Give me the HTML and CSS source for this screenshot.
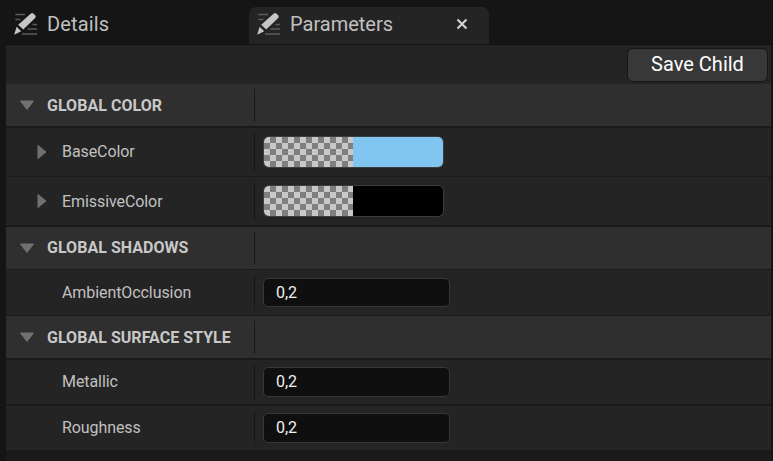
FILE: index.html
```
<!DOCTYPE html>
<html lang="en">
<head>
<meta charset="utf-8">
<title>Parameters</title>
<link rel="stylesheet" href="styles.css">
</head>
<body>
<svg class="defs" aria-hidden="true">
  <symbol id="pencil" viewBox="0 0 24 24">
    <path d="M1.300 2.500H11M1.300 7.500H6.500M18.500 12.500h4.500M13.500 17h9.500M8 22h15" stroke="#5c5c5c" stroke-width="1.300" fill="none"/>
    <path d="M16.600 1.700Q18 .5 19.300 1.500L21.300 3.500Q22.300 4.700 21.200 6L9.200 17.500 4.200 12.800Z" fill="#c6c6c6"/>
    <path d="M2.600 14.700L7.200 19.300 .2 22.700Z" fill="#c6c6c6"/>
  </symbol>
</svg>
<nav class="tabs">
  <div class="tab"><svg class="icon"><use href="#pencil"/></svg><span class="tab-name details">Details</span></div>
  <div class="tab active"><svg class="icon"><use href="#pencil"/></svg><span class="tab-name">Parameters</span>
    <svg class="close" viewBox="0 0 12 12"><path d="M1.500 1.500l9 9M10.500 1.500l-9 9" stroke="#d0d0d0" stroke-width="2.200"/></svg></div>
</nav>
<main class="panel">
  <div class="toolbar"><button class="save">Save Child</button></div>
  <section class="group">
    <h2 class="row head"><span class="name"><svg class="arrow down" viewBox="0 0 16 11"><path d="M1.500 1h13L8 9.500z"/></svg><span>GLOBAL COLOR</span></span></h2>
    <div class="row tall"><span class="name"><svg class="arrow right" viewBox="0 0 11 16"><path d="M1 1.500v13L9 8z"/></svg><span class="raised">BaseColor</span></span><span class="swatch blue"></span></div>
    <div class="row tall second"><span class="name"><svg class="arrow right" viewBox="0 0 11 16"><path d="M1 1.500v13L9 8z"/></svg><span>EmissiveColor</span></span><span class="swatch black"></span></div>
  </section>
  <section class="group">
    <h2 class="row head"><span class="name"><svg class="arrow down" viewBox="0 0 16 11"><path d="M1.500 1h13L8 9.500z"/></svg><span class="raised">GLOBAL SHADOWS</span></span></h2>
    <div class="row ambient"><span class="name plain"><span>AmbientOcclusion</span></span><span class="field">0,2</span></div>
  </section>
  <section class="group">
    <h2 class="row head"><span class="name"><svg class="arrow down" viewBox="0 0 16 11"><path d="M1.500 1h13L8 9.500z"/></svg><span>GLOBAL SURFACE STYLE</span></span></h2>
    <div class="row"><span class="name plain"><span class="raised">Metallic</span></span><span class="field high">0,2</span></div>
    <div class="row"><span class="name plain"><span class="raised">Roughness</span></span><span class="field high">0,2</span></div>
  </section>
</main>
</body>
</html>
```
FILE: styles.css
```
* { box-sizing: border-box; }
body {
  margin: 0;
  height: 461px;
  overflow: hidden;
  background: #151515;
  color: #c0c0c0;
  font: 16px Roboto, sans-serif;
}
.defs { display: none; }
.tabs { display: flex; height: 44px; padding: 7px 0 0 6px; }
.tab { display: flex; width: 243px; height: 37px; padding-left: 8px; }
.active { width: 240px; background: #242424; border-radius: 7px 7px 0 0; }
.icon { width: 24px; height: 24px; margin-top: 5px; flex: none; }
.tab-name { margin-left: 9px; font-size: 20px; line-height: 34px; }
.details { letter-spacing: .15px; }
.close { width: 12px; height: 12px; margin: 11px 21px 0 auto; }
.panel { width: 765px; height: 417px; margin-left: 6px; border-top: 1px solid #101010; background: #1a1a1a; }
.toolbar { display: flex; justify-content: flex-end; height: 39px; padding: 3px 3px 0 0; background: #242424; }
.save {
  width: 141px;
  height: 34px;
  padding: 0 0 2px;
  border: 1px solid #151515;
  border-radius: 6px;
  background: #383838;
  color: #fff;
  font: 20px/30px Roboto, sans-serif;
}
.row {
  display: flex;
  align-items: center;
  height: 44px;
  margin: 0 0 2px;
  background: #242424;
  font-size: 16px;
  font-weight: 400;
  letter-spacing: -.08px;
}
.head { height: 42px; background: #2f2f2f; font-weight: 700; color: #c8c8c8; letter-spacing: .03px; }
.tall { height: 48px; margin-bottom: 1px; }
.second { margin-bottom: 2px; }
.group:nth-of-type(2) .head { margin-bottom: 1px; }
.ambient { height: 45px; margin-bottom: 1px; }
.name {
  display: flex;
  align-items: center;
  width: 249px;
  height: calc(100% - 9px);
  padding-left: 13px;
  border-right: 1px solid #181818;
  white-space: nowrap;
}
.plain { padding-left: 56px; }
.raised { padding-bottom: 2px; }
.arrow { flex: none; fill: #707070; stroke: #707070; stroke-width: 1; stroke-linejoin: round; }
.down { width: 16px; height: 11px; margin-right: 12px; }
.right { width: 11px; height: 16px; margin: 0 14px 0 18px; }
.swatch {
  width: 179px;
  height: 30px;
  margin-left: 9px;
  border-radius: 5px;
  box-shadow: 0 0 0 1px #3c3c3c;
  --tint: #80c5f0;
  background:
    linear-gradient(90deg, transparent 89px, var(--tint) 89px),
    repeating-conic-gradient(#7e7e7e 0 25%, #c8c8c8 0 50%) 0 0 / 12px 12px;
}
.black { --tint: #000; }
.field {
  width: 187px;
  height: 29px;
  margin-left: 8px;
  padding-left: 12px;
  border: 1px solid #373737;
  border-radius: 5px;
  background: #0f0f0f;
  color: #f0f0f0;
  line-height: 27px;
}
.high { height: 30px; line-height: 28px; }
```
